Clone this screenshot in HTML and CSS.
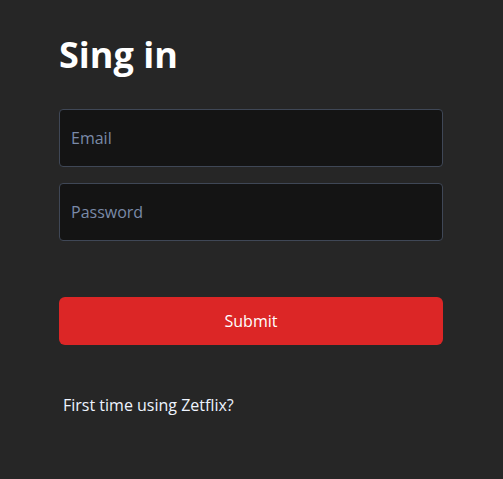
FILE: index.html
```html
<!DOCTYPE html>
<html lang="en">
<head>
<meta charset="utf-8">
<title>Sign in</title>
<link rel="stylesheet" href="styles.css">
</head>
<body>
<main class="page">
  <form class="card">
    <h1 class="title">Sing in</h1>
    <input class="field" type="email" placeholder="Email">
    <input class="field" type="password" placeholder="Password">
    <button class="submit" type="button">Submit</button>
    <p class="note">First time using Zetflix?</p>
  </form>
</main>
</body>
</html>
```

FILE: styles.css
```css
html, body {
  margin: 0;
  height: 100%;
  background: #262626;
  font-family: "Open Sans", "Noto Sans", sans-serif;
}
.page {
  display: flex;
  justify-content: center;
  padding: 35px 1px 0 0;
}
.card {
  width: 384px;
  display: flex;
  flex-direction: column;
}
.title {
  margin: 0;
  color: #ffffff;
  font-size: 36px;
  line-height: 40px;
  font-weight: 700;
}
.field {
  box-sizing: border-box;
  height: 58px;
  margin-top: 16px;
  padding: 0 11px;
  background: #141414;
  border: 1px solid #3f4756;
  border-radius: 4px;
  color: #fff;
  font-family: inherit;
  font-size: 16px;
  outline: none;
}
.title + .field {
  margin-top: 34px;
}
.field::placeholder {
  color: #7a8aa8;
}
.submit {
  height: 48px;
  margin-top: 56px;
  background: #dc2626;
  border: none;
  border-radius: 6px;
  color: #ffffff;
  font-family: inherit;
  font-size: 16px;
}
.note {
  margin: 48px 0 0;
  padding-left: 4px;
  color: #eef4ff;
  font-size: 16px;
  line-height: 24px;
}
```
